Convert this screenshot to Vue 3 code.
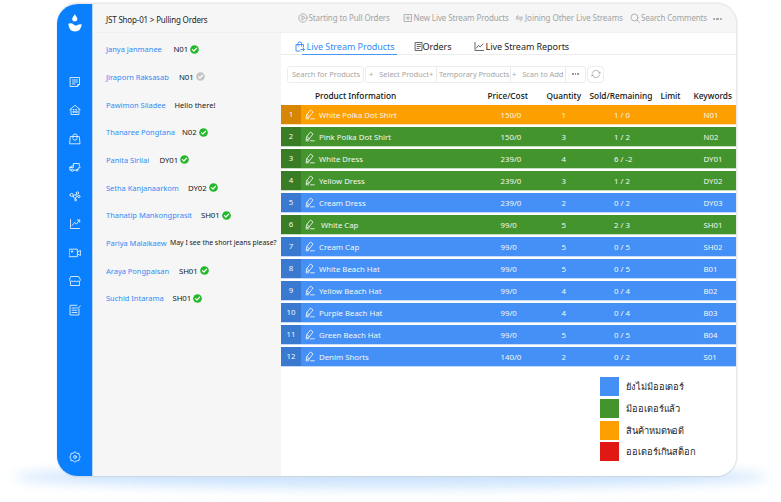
<script setup>
const messages = [
  { name: 'Janya Janmanee', w: 57, text: 'N01', status: 'ok' },
  { name: 'Jiraporn Raksasab', w: 62.5, text: 'N01', status: 'off' },
  { name: 'Pawimon Siladee', w: 58, text: 'Hello there!' },
  { name: 'Thanaree Pongtana', w: 65.5, text: 'N02', status: 'ok' },
  { name: 'Panita Sirilai', w: 43, text: 'DY01', status: 'ok' },
  { name: 'Setha Kanjanaarkom', w: 71.5, text: 'DY02', status: 'ok' },
  { name: 'Thanatip Mankongprasit', w: 84.5, text: 'SH01', status: 'ok' },
  { name: 'Pariya Malaikaew', w: 60, text: 'May I see the short jeans please?', near: true },
  { name: 'Araya Pongpaisan', w: 62.5, text: 'SH01', status: 'ok' },
  { name: 'Suchid Intarama', w: 56, text: 'SH01', status: 'ok' },
]
const rows = [
  ['White Polka Dot Shirt', '150/0', 1, '1 / 0', 'N01', 'orange'],
  ['Pink Polka Dot Shirt', '150/0', 3, '1 / 2', 'N02', 'green'],
  ['White Dress', '239/0', 4, '6 / -2', 'DY01', 'green'],
  ['Yellow Dress', '239/0', 3, '1 / 2', 'DY02', 'green'],
  ['Cream Dress', '239/0', 2, '0 / 2', 'DY03', 'blue'],
  ['White Cap', '99/0', 5, '2 / 3', 'SH01', 'green indent'],
  ['Cream Cap', '99/0', 5, '0 / 5', 'SH02', 'blue'],
  ['White Beach Hat', '99/0', 5, '0 / 5', 'B01', 'blue'],
  ['Yellow Beach Hat', '99/0', 4, '0 / 4', 'B02', 'blue'],
  ['Purple Beach Hat', '99/0', 4, '0 / 4', 'B03', 'blue'],
  ['Green Beach Hat', '99/0', 5, '0 / 5', 'B04', 'blue'],
  ['Denim Shorts', '140/0', 2, '0 / 2', 'S01', 'blue'],
]
const legend = [
  ['blue', 'ยังไม่มีออเดอร์'],
  ['green', 'มีออเดอร์แล้ว'],
  ['orange', 'สินค้าหมดพอดี'],
  ['red', 'ออเดอร์เกินสต็อก'],
]
const navIcons = [
  'M1.5 1.5h9v7l-2 2h-7zM8.5 10.5v-2h2M3.5 4h5M3.5 6h5M3.5 8h2.5',
  'M.8 5.7L6 1.3l5.2 4.4M2 5v5.5h8V5M4 5.5h1M6.5 5.5h1M4 8.2V7h1.2v1.2zM6.7 8.2V7h1.5v1.2z',
  'M1.700 3.500h8.600l.7 7.300H1zM4 5V2.500Q4 1 6 1t2 1.500V5M4 6.300q2 2.500 4 0',
  'M4.400 9.200H7.500M9 8.800l.3-2H11V5.500L10.300 5V2.500H4.400V4.200L3 5.200.8 6v2.800h1M2 9.200a1.200 1.200 0 1 0 2.400 0a1.200 1.200 0 1 0-2.400 0M7.200 9.200a.9.9 0 1 0 1.800 0a.9.900 0 1 0-1.800 0M1 6.500H4.400V4.200',
  'M1 5a1.600 1.600 0 1 0 3.200 0a1.600 1.600 0 1 0-3.200 0M4.300 6.500a1.600 1.600 0 1 0 3.200 0a1.600 1.600 0 1 0-3.200 0M7.300 3a1.200 1.200 0 1 0 2.400 0a1.200 1.200 0 1 0-2.400 0M8.700 6.500a1.200 1.200 0 1 0 2.400 0a1.200 1.200 0 1 0-2.400 0M5.800 10a.9.9 0 1 0 1.800 0a.9.9 0 1 0-1.800 0M6.800 5.200l.8-1.200M6.200 8.100L6.500 9',
  'M1.5 1.5v9h9M3.2 7.5l2.3-3 2 1.5 3-4M8.3 2h2.4v2.2',
  'M.5 2.200h7.900v7.500H.5zM8.700 5L11.400 3.300v5.200L8.700 7M2.200 4.500h1.600M3 3.700v1.600',
  'M2.2 1.5h7.6L11.300 4.500v1Q10.500 7 9.3 6 7.8 7.2 6 6 4.2 7.2 2.7 6 1.5 7 .7 5.5v-1zM1.500 6.500v4h9v-4',
  'M8 1.300H1v9.700h9V5M3 4h4M3 6.2h5M3 8.5h5M8 3.500l1 1L11.3 1.8',
]
</script>

<template>
  <div class="page">
    <div class="glow"></div>
    <div class="window">
      <nav class="side">
        <svg class="logo" viewBox="0 0 14 18"><path d="M6.800 .2C8.200 2.500 9.400 3.700 9.400 5.100Q9.400 7.400 6.800 7.400T4.200 5.100C4.200 3.700 5.400 2.500 6.800 .2ZM.3 9.800Q3.500 8.600 5.300 10.300Q7 12 9 11.300Q11 10 13.700 10.200Q13 17.500 7 17.500T.3 9.800Z" /></svg>
        <svg v-for="(d, i) in navIcons" :key="i" class="nav-icon" viewBox="0 0 12 12"><path :d="d" /></svg>
        <svg class="nav-icon gear" viewBox="0 0 12 12"><path d="M6 .8L7.700 2.200 10 2.500 10.300 4.500 11.200 6 10.300 7.500 10 9.500 7.700 9.800 6 11.200 4.300 9.800 2 9.500 1.700 7.500.8 6 1.700 4.500 2 2.500 4.300 2.200z" /><circle cx="6" cy="6" r="1.400" /></svg>
      </nav>
      <div class="content">
        <header class="top">
          <div class="crumb">JST Shop-01 &gt; Pulling Orders</div>
          <div class="action a1"><svg viewBox="0 0 10 10"><circle cx="5" cy="5" r="4.200" /><path d="M4 3v4l3-2z" /></svg><span>Starting to Pull Orders</span></div>
          <div class="action a2"><svg viewBox="0 0 10 10"><path d="M1.500 1.500h7v7h-7zM5 3v4M3 5h4" /></svg><span>New Live Stream Products</span></div>
          <div class="action a3"><svg viewBox="0 0 10 10"><path d="M7.500 4.200H1L3 2.500M1 6H7.500L5.500 7.800" /></svg><span>Joining Other Live Streams</span></div>
          <div class="action a4"><svg viewBox="0 0 10 10"><circle cx="4.500" cy="4.500" r="3.500" /><path d="M7 7l2.500 2.500" /></svg><span>Search Comments</span></div>
          <div class="dots"><i></i><i></i><i></i></div>
        </header>
        <div class="body">
          <aside class="chat">
            <div v-for="m in messages" :key="m.name" class="msg">
              <span class="who" :style="{ width: m.w + 'px' }">{{ m.name }}</span>
              <span class="said" :class="{ near: m.near, code: m.status }">{{ m.text }}</span>
              <svg v-if="m.status" class="check" :class="m.status" viewBox="0 0 10 10"><circle cx="5" cy="5" r="4.800" /><path d="M2.700 5.200l1.600 1.500 3-3.100" /></svg>
            </div>
          </aside>
          <main>
            <div class="tabs">
              <div class="tab active"><svg viewBox="0 0 10 11"><path d="M5 10H1V3.500h7.500V6M3 5V2.500Q3 1 4.800 1t1.700 1.500V5M6 8.500h3.500M8 7l1.500 1.500L8 10" /></svg><span>Live Stream Products</span></div>
              <div class="tab orders"><svg viewBox="0 0 10 11"><path d="M1.500 1.500h6.500v8H1.500zM3 3.500h3.500M3 5.500h3.500M3 7.500h2" /></svg><span>Orders</span></div>
              <div class="tab reports"><svg viewBox="0 0 10 11"><path d="M1 1.500v8h8.500M2.500 7l2-2.500 1.700 1.300L9 3" /></svg><span>Live Stream Reports</span></div>
            </div>
            <div class="tools">
              <div class="search">Search for Products</div>
              <div class="group">
                <div class="g1"><b>+</b><span>Select Product</span><b>+</b></div>
                <div class="g2"><span>Temporary Products</span></div>
                <div class="g3"><b>+</b><span>Scan to Add</span></div>
                <div class="g4"><i></i><i></i><i></i></div>
              </div>
              <div class="refresh"><svg viewBox="0 0 10 10"><path d="M1.200 4.200a4 4 0 0 1 7.500-.5M8.800 5.800a4 4 0 0 1-7.500.5M7.500 4l1.300.2.700-1.200M2.500 6l-1.300-.2L.5 7" /></svg></div>
            </div>
            <div class="thead">
              <span>Product Information</span><span>Price/Cost</span><span>Quantity</span><span>Sold/Remaining</span><span>Limit</span><span>Keywords</span>
            </div>
            <div v-for="(r, i) in rows" :key="i" class="row" :class="r[5]">
              <span class="num">{{ i + 1 }}</span>
              <svg class="pen" viewBox="0 0 10 11"><path d="M1.200 8.500L1.800 5.500 5.500 1 8 3 4.300 7.800zM1.800 5.500L4.300 7.800M1 9.800h2.500M5.500 9.800h3.800" /></svg>
              <span class="name">{{ r[0] }}</span><span>{{ r[1] }}</span><span>{{ r[2] }}</span><span>{{ r[3] }}</span><span>{{ r[4] }}</span>
            </div>
            <div class="legend">
              <div v-for="l in legend" :key="l[0]" class="item"><i :class="l[0]"></i><span>{{ l[1] }}</span></div>
            </div>
          </main>
        </div>
      </div>
    </div>
  </div>
</template>

<style>
body { background: #fff; overflow: hidden; }
</style>
<style scoped>
* { box-sizing: border-box; }
.page { position: relative; width: 781px; height: 502px; padding: 3px 0 0 57px; overflow: hidden; font-family: "Noto Sans", "Open Sans", sans-serif; color: #252525; font-size: 7.500px; white-space: nowrap; }
.glow { position: absolute; left: 14px; top: 466px; width: 754px; height: 22px; border-radius: 50%; background: #b9dafc; filter: blur(6px); opacity: .7; }
.window { position: relative; width: 680px; height: 474px; display: flex; overflow: hidden; background: #fff; border-radius: 21px; border-top: 1px solid #e8e8e8; border-right: 1px solid #e6e8eb; border-bottom: 1px solid #cbdae8; box-shadow: 0 0 2px #ccd5df; }
svg { display: block; flex: none; fill: none; stroke: currentColor; stroke-linecap: round; stroke-linejoin: round; }
.side { width: 35px; flex: none; background: #0a80ff; display: flex; flex-direction: column; align-items: center; color: #e4f1ff; }
.logo { width: 14px; height: 18px; margin: 10px 0 44px; fill: #fff; stroke: none; }
.nav-icon { width: 12px; height: 12px; margin-bottom: 16.450px; stroke-width: .9; }
.gear { margin-top: auto; margin-bottom: 13px; }
.content { flex: 1; min-width: 0; display: flex; flex-direction: column; border-left: 1px solid #b7d7fb; }
.top { height: 29px; flex: none; display: flex; background: #f6f6f6; border-bottom: 1px solid #f1f1f1; color: #a3a3a3; font-size: 8px; line-height: 27px; letter-spacing: -.11px; }
.crumb { width: 204.500px; padding: 2px 0 0 13px; color: #252525; letter-spacing: -.18px; }
.action { display: flex; align-items: center; gap: 1px; height: 27px; }
.action svg { width: 10px; height: 10px; stroke-width: .8; }
.a1 { width: 105px; } .a2 { width: 112.500px; } .a3 { width: 115px; } .a4 { width: 83px; letter-spacing: -.17px; }
.a3 { gap: 0; letter-spacing: -.07px; }
.dots { display: flex; align-items: center; gap: 1px; padding-top: 2px; }
.dots i { width: 2.300px; height: 2.300px; border-radius: 50%; background: #999; }
.body { display: flex; flex: 1; min-height: 0; }
.chat { width: 188px; flex: none; background: #f6f6f6; padding: 2.500px 0 0 13px; }
.msg { height: 27.670px; display: flex; align-items: center; }
.who { color: #348bf5; flex: none; letter-spacing: -.02px; }
.said { margin-left: 10.500px; color: #202020; }
.said.code { font-size: 7.800px; letter-spacing: -.1px; }
.said.near { margin-left: 4px; font-size: 6.900px; }
.check { width: 9px; height: 9px; margin-left: 2px; stroke: none; }
.check.ok { fill: #22b928; } .check.off { fill: #c4c4c4; }
.check path { fill: none; stroke: #fff; stroke-width: 1.300; }
main { flex: 1; min-width: 0; background: #fff; }
.tabs { height: 21.500px; display: flex; border-bottom: 1px solid #ededed; font-size: 9px; letter-spacing: -.05px; }
.tab { display: flex; align-items: center; height: 22px; padding-top: 5px; }
.tab svg { width: 10px; height: 11px; stroke-width: .9; color: #555; }
.active { position: relative; width: 119px; margin-left: 14px; color: #348bf5; gap: 1.500px; }
.active svg { color: #348bf5; }
.active::after { content: ""; position: absolute; left: 7px; top: 21px; width: 95px; height: 1px; background: #4796f7; }
.orders { width: 60px; } .orders svg { margin-right: -1.500px; } .reports { gap: 1.500px; }
.tools { display: flex; height: 33.500px; padding: 11px 0 0 6px; color: #a6a6a6; font-size: 7.500px; line-height: 15px; letter-spacing: -.05px; }
.search { width: 77px; height: 17px; padding-left: 4px; border: 1px solid #ececec; border-radius: 3px; }
.group { display: flex; width: 221px; height: 17px; margin-left: 1px; border: 1px solid #ececec; border-radius: 3px; }
.group > div { border-right: 1px solid #ececec; display: flex; }
.group b { font-weight: 400; }
.g1 { width: 71px; padding-left: 3px; } .g1 b:first-child { margin-right: 6px; }
.g2 { width: 74px; padding-left: 2px; }
.g3 { width: 55px; padding-left: 1px; } .g3 b { margin-right: 6px; }
.group > .g4 { flex: 1; border-right: 0; align-items: center; justify-content: center; gap: 1px; }
.g4 i { width: 1.500px; height: 1.500px; border-radius: 50%; background: #888; }
.refresh { width: 17px; height: 17px; margin-left: 1px; padding: 2.500px; border: 1px solid #ececec; border-radius: 4px; }
.refresh svg { width: 10px; height: 10px; stroke-width: .8; }
.thead { display: grid; grid-template-columns: 172.500px 59px 43px 71px 33px 1fr; padding: 0 0 3px 34px; height: 17px; align-items: center; font-size: 8.300px; font-weight: 500; color: #111; }
.row { display: grid; grid-template-columns: 20px 18px 181.500px 61px 52.500px 89.500px 1fr; height: 20px; margin-bottom: 2px; align-items: center; color: #f3f7f3; font-size: 7.800px; border-bottom: 1px solid #ffffffa8; background-clip: padding-box; }
.num { height: 19px; line-height: 19px; text-align: center; background: #00000028; }
.pen { width: 10px; height: 11px; margin-left: 4px; margin-bottom: 1px; stroke-width: .85; }
.orange { background-color: #fe9f00; border-bottom-color: #ffe2b3; } .green { background-color: #44942e; border-bottom-color: #c6dfc0; } .blue { background-color: #4490f7; border-bottom-color: #c2dbfc; } .red { background-color: #e11914; }
.indent .name { padding-left: 2px; }
.legend { padding: 6.800px 0 0 319px; }
.item { display: flex; align-items: center; height: 21.700px; }
.item i { width: 19px; height: 19px; margin-right: 7px; }
.item span { font-size: 9.300px; line-height: 19px; letter-spacing: -.07px; }
</style>
